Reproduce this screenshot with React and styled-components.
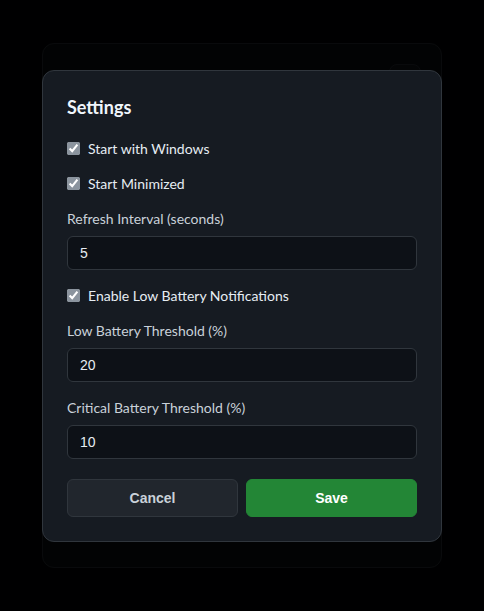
import React, { useState } from 'react';
import styled, { createGlobalStyle } from 'styled-components';

const GlobalStyle = createGlobalStyle`
  html, body {
    margin: 0;
    padding: 0;
    background: #010409;
    font-family: Lato, "Noto Sans", sans-serif;
    color: #e6edf3;
  }
  * { box-sizing: border-box; }
`;

const Page = styled.div`
  min-height: 100vh;
  display: flex;
  align-items: center;
  justify-content: center;
`;

const AppWindow = styled.div`
  width: 400px;
  height: 525px;
  background: #0d1117;
  border: 1px solid #30363d;
  border-radius: 12px;
  padding: 20px 20px;
`;

const Header = styled.div`
  display: flex;
  justify-content: flex-end;
`;

const GearButton = styled.button`
  width: 32px;
  height: 28px;
  background: #161b22;
  border: 1px solid #30363d;
  border-radius: 8px;
`;

const Overlay = styled.div`
  position: fixed;
  inset: 0;
  background: rgba(0, 0, 0, 0.8);
  display: flex;
  align-items: center;
  justify-content: center;
`;

const Modal = styled.div`
  width: 400px;
  background: #161b22;
  border: 1px solid #30363d;
  border-radius: 12px;
  padding: 24px;
`;

const Title = styled.h2`
  margin: 0 0 20px;
  font-size: 18px;
  font-weight: 700;
  line-height: 24px;
  color: #f0f6fc;
`;

const Group = styled.div`
  margin-bottom: ${(p) => (p.$last ? '0' : '16px')};
`;

const CheckRow = styled.label`
  display: flex;
  align-items: center;
  gap: 8px;
  font-size: 14px;
  line-height: 19px;
  color: #e6edf3;
  cursor: pointer;

  input {
    margin: 0;
    width: 13px;
    height: 13px;
    accent-color: #8b949e;
  }
`;

const FieldLabel = styled.label`
  display: block;
  font-size: 14px;
  line-height: 20px;
  margin-bottom: 7px;
  color: #c9d1d9;
`;

const Input = styled.input`
  display: block;
  width: 100%;
  height: 34px;
  padding: 0 12px;
  background: #0d1117;
  border: 1px solid #30363d;
  border-radius: 6px;
  color: #e6edf3;
  font-family: "Liberation Sans", Arial, sans-serif;
  font-size: 14px;
  outline: none;
`;

const Actions = styled.div`
  display: grid;
  grid-template-columns: 1fr 1fr;
  gap: 8px;
  margin-top: 20px;
`;

const Button = styled.button`
  height: 38px;
  border-radius: 6px;
  font-family: "Liberation Sans", Arial, sans-serif;
  font-size: 14px;
  font-weight: 700;
  cursor: pointer;
  background: ${(p) => (p.$primary ? '#238636' : '#21262d')};
  border: 1px solid ${(p) => (p.$primary ? '#238636' : '#30363d')};
  color: ${(p) => (p.$primary ? '#ffffff' : '#c9d1d9')};
`;

export default function App() {
  const [s, setS] = useState({
    startWithWindows: true,
    startMinimized: true,
    refresh: '5',
    notify: true,
    low: '20',
    critical: '10',
  });
  const set = (k) => (e) =>
    setS({ ...s, [k]: e.target.type === 'checkbox' ? e.target.checked : e.target.value });

  return (
    <>
      <GlobalStyle />
      <Page>
        <AppWindow>
          <Header>
            <GearButton aria-label="Settings" />
          </Header>
        </AppWindow>
      </Page>
      <Overlay>
        <Modal>
          <Title>Settings</Title>
          <Group>
            <CheckRow>
              <input type="checkbox" checked={s.startWithWindows} onChange={set('startWithWindows')} />
              Start with Windows
            </CheckRow>
          </Group>
          <Group>
            <CheckRow>
              <input type="checkbox" checked={s.startMinimized} onChange={set('startMinimized')} />
              Start Minimized
            </CheckRow>
          </Group>
          <Group>
            <FieldLabel>Refresh Interval (seconds)</FieldLabel>
            <Input type="text" value={s.refresh} onChange={set('refresh')} />
          </Group>
          <Group>
            <CheckRow>
              <input type="checkbox" checked={s.notify} onChange={set('notify')} />
              Enable Low Battery Notifications
            </CheckRow>
          </Group>
          <Group>
            <FieldLabel>Low Battery Threshold (%)</FieldLabel>
            <Input type="text" value={s.low} onChange={set('low')} />
          </Group>
          <Group $last>
            <FieldLabel>Critical Battery Threshold (%)</FieldLabel>
            <Input type="text" value={s.critical} onChange={set('critical')} />
          </Group>
          <Actions>
            <Button>Cancel</Button>
            <Button $primary>Save</Button>
          </Actions>
        </Modal>
      </Overlay>
    </>
  );
}
